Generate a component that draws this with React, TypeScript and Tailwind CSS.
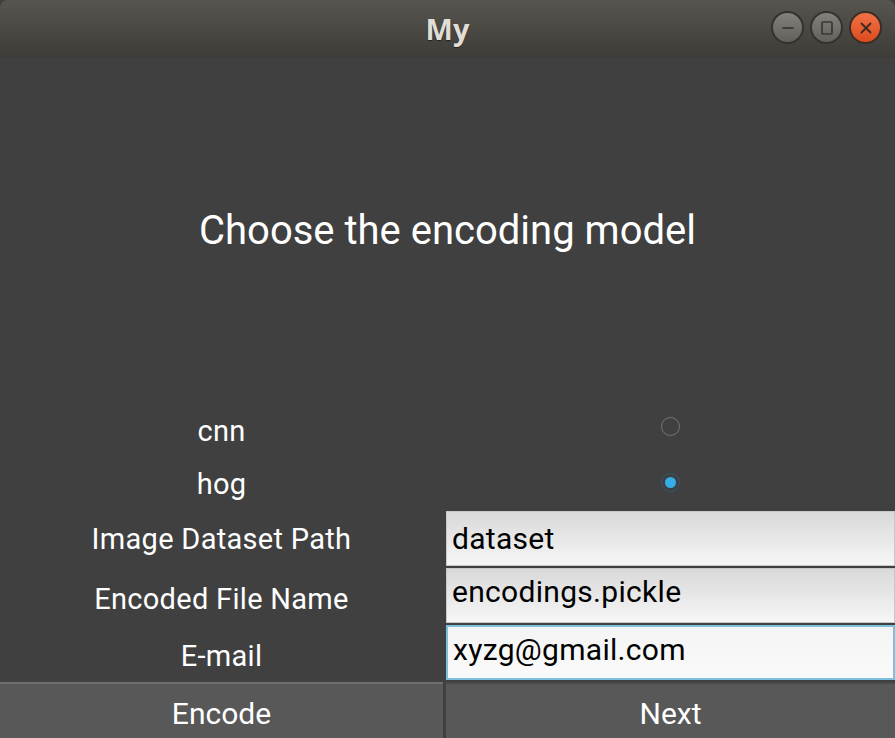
import { useState } from "react";

const ROBOTO = "font-['Roboto',sans-serif]";

function WinButton({ kind }: { kind: "min" | "max" | "close" }) {
  if (kind === "close") {
    return (
      <div className="w-[33px] h-[33px] rounded-full border-2 border-[#3a2e27] bg-gradient-to-b from-[#f27245] to-[#dc4a1b] flex items-center justify-center">
        <svg width="14" height="14" viewBox="0 0 14 14">
          <path d="M2.5 2.5 L11.5 11.5 M11.5 2.5 L2.5 11.5" stroke="#3b2a20" strokeWidth="1.8" strokeLinecap="round" />
        </svg>
      </div>
    );
  }
  return (
    <div className="w-[33px] h-[33px] rounded-full border-2 border-[#34332f] bg-gradient-to-b from-[#82817c] to-[#62615d] flex items-center justify-center">
      {kind === "min" ? (
        <svg width="16" height="16" viewBox="0 0 16 16">
          <path d="M2.5 8 H13.5" stroke="#393834" strokeWidth="1.8" />
        </svg>
      ) : (
        <svg width="16" height="16" viewBox="0 0 16 16">
          <rect x="3" y="2" width="10" height="12" rx="1" fill="none" stroke="#393834" strokeWidth="1.7" />
        </svg>
      )}
    </div>
  );
}

function Radio({ on, onClick }: { on: boolean; onClick: () => void }) {
  return (
    <button
      onClick={onClick}
      className={`w-[19px] h-[19px] rounded-full border-[1.5px] flex items-center justify-center ${
        on ? "border-[#2e5a70]" : "border-[#747474]"
      }`}
    >
      {on && <span className="w-[11px] h-[11px] rounded-full bg-[#33aee8]" />}
    </button>
  );
}

function Field({ value, focus, low }: { value: string; focus?: boolean; low?: boolean }) {
  return (
    <div
      className={`h-full flex items-start px-[5px] text-[30px] leading-[36px] text-black ${ROBOTO} ${
        focus
          ? "pt-[5px] bg-gradient-to-b from-[#f4f4f4] to-[#fafafa] border-2 border-[#7cc0dc]"
          : `${low ? "pt-[5px]" : "pt-[9px]"} bg-gradient-to-b from-[#d9d9d9] to-[#f6f6f6] border border-[#c8c8c8]`
      }`}
    >
      {value}
    </div>
  );
}

export default function App() {
  const [model, setModel] = useState("hog");

  return (
    <div className="w-[895px] h-[738px] flex flex-col bg-[#404040] overflow-hidden">
      {/* title bar */}
      <div className="h-[58px] shrink-0 rounded-t-[8px] bg-gradient-to-b from-[#57554f] to-[#3d3c38] flex items-center relative">
        <div className="flex-1 text-center text-[29px] font-bold text-[#e2ded6] font-['Open_Sans',sans-serif] [text-shadow:0_1px_1px_#222]">
          My
        </div>
        <div className="absolute right-[13px] top-[11px] flex gap-[6px]">
          <WinButton kind="min" />
          <WinButton kind="max" />
          <WinButton kind="close" />
        </div>
      </div>

      {/* heading */}
      <div className={`flex-1 flex items-center justify-center pt-[4px] text-white text-[40px] ${ROBOTO}`}>
        Choose the encoding model
      </div>

      {/* form grid */}
      <div className={`grid grid-cols-[443px_1fr] gap-x-[3px] gap-y-[2px] grid-rows-[54px_54px_55px_55px_55px_56px] text-white text-[29px] tracking-[0.3px] ${ROBOTO}`}>
        <div className="flex items-center justify-center pt-[12px]">cnn</div>
        <div className="flex items-center justify-center">
          <Radio on={model === "cnn"} onClick={() => setModel("cnn")} />
        </div>

        <div className="flex items-center justify-center pt-[6px]">hog</div>
        <div className="flex items-center justify-center">
          <Radio on={model === "hog"} onClick={() => setModel("hog")} />
        </div>

        <div className="flex items-center justify-center pt-[3px]">Image Dataset Path</div>
        <Field value="dataset" />

        <div className="flex items-center justify-center pt-[8px]">Encoded File Name</div>
        <Field value="encodings.pickle" low />

        <div className="flex items-center justify-center pt-[8px]">E-mail</div>
        <Field value="xyzg@gmail.com" focus />

        <button className="bg-[#585858] border-t-2 border-[#6e6e6e] pt-[4px] text-white text-[30px] tracking-normal flex items-center justify-center">
          Encode
        </button>
        <button className="bg-[#585858] border-t-2 border-[#4a4a4a] pt-[4px] text-white text-[30px] tracking-normal flex items-center justify-center">
          Next
        </button>
      </div>
    </div>
  );
}
